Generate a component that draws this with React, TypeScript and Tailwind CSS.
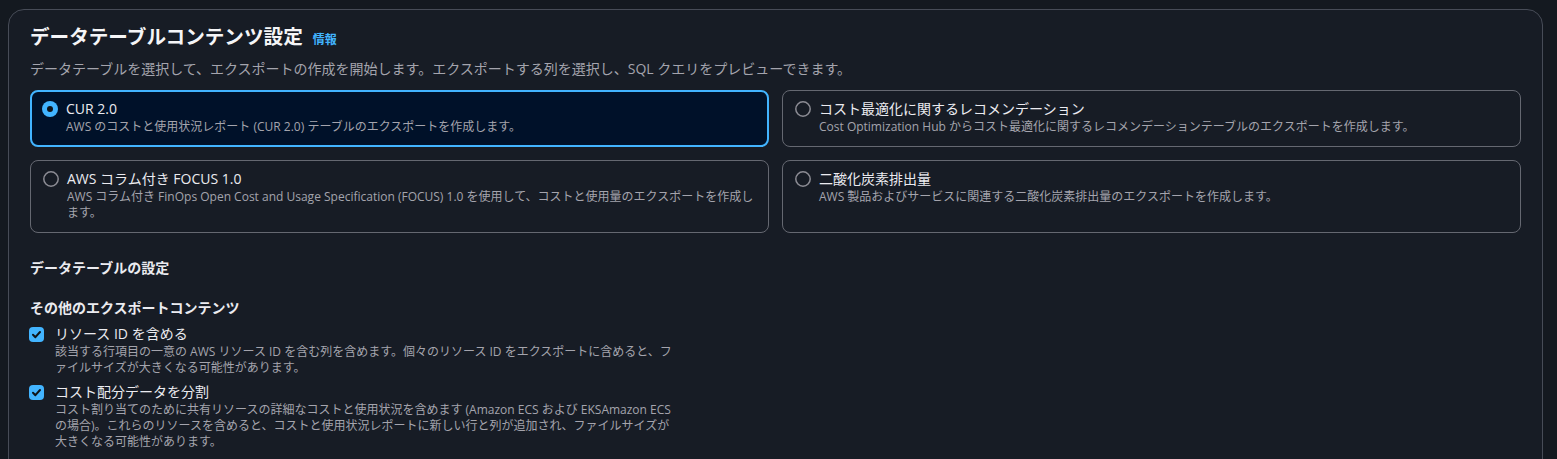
import React from "react";

const FONT = { fontFamily: '"Open Sans", "Noto Sans CJK JP", sans-serif' };

function Radio({ checked }: { checked: boolean }) {
  return (
    <svg width="16" height="16" viewBox="0 0 16 16" className="shrink-0 mt-[2px]">
      {checked ? (
        <>
          <circle cx="8" cy="8" r="8" fill="#42b4ff" />
          <circle cx="8" cy="8" r="3" fill="#0f141a" />
        </>
      ) : (
        <circle cx="8" cy="8" r="7.2" fill="none" stroke="#8c8c94" strokeWidth="1.5" />
      )}
    </svg>
  );
}

function Checkbox() {
  return (
    <div className="shrink-0 mt-[3px] -ml-[1px] w-[15px] h-[15px] rounded-[4px] bg-[#42b4ff] flex items-center justify-center">
      <svg width="11" height="11" viewBox="0 0 11 11">
        <path d="M2 5.8 L4.4 8.2 L9 3" fill="none" stroke="#0f141a" strokeWidth="2" strokeLinecap="round" strokeLinejoin="round" />
      </svg>
    </div>
  );
}

function Tile({
  checked,
  title,
  lines,
}: {
  checked: boolean;
  title: string;
  lines: string[];
}) {
  return (
    <div
      className={
        checked
          ? "rounded-[8px] border-2 border-[#42b4ff] bg-[#001129] pl-[10px] pr-[10px] pt-[7px] pb-[10px] flex gap-2"
          : "rounded-[8px] border border-[#656871] pl-[12px] pr-[12px] pt-[8px] pb-[11px] flex gap-2"
      }
    >
      <Radio checked={checked} />
      <div className="flex flex-col min-w-0">
        <div className="text-[14px] leading-[20px] text-[#ebebf0]">{title}</div>
        <div className="text-[12px] leading-[16px] text-[#a4a4ad]">
          {lines.map((l, i) => (
            <div key={i} className="whitespace-nowrap">
              {l}
            </div>
          ))}
        </div>
      </div>
    </div>
  );
}

function CheckItem({ label, lines }: { label: string; lines: string[] }) {
  return (
    <div className="flex gap-[11px]">
      <Checkbox />
      <div className="flex flex-col">
        <div className="text-[14px] leading-[20px] text-[#ebebf0]">{label}</div>
        <div className="text-[12px] leading-[16px] text-[#a4a4ad]">
          {lines.map((l, i) => (
            <div key={i} className="whitespace-nowrap">
              {l}
            </div>
          ))}
        </div>
      </div>
    </div>
  );
}

export default function App() {
  return (
    <div className="w-[1557px] h-[459px] overflow-hidden bg-[#141920]" style={FONT}>
      <div className="ml-[8px] mt-[9px] w-[1535px] h-[480px] rounded-[16px] border border-[#474c57] bg-[#171c25] pl-[21px] pr-[21px] pt-[15px]">
        <div className="flex items-baseline gap-[10px]">
          <h2 className="text-[19.6px] leading-[24px] font-bold text-[#f5f5f7]">データテーブルコンテンツ設定</h2>
          <span className="text-[12px] font-bold text-[#42b4ff]">情報</span>
        </div>
        <p className="mt-[10px] text-[14px] leading-[20px] text-[#a4a4ad]">
          データテーブルを選択して、エクスポートの作成を開始します。エクスポートする列を選択し、SQL クエリをプレビューできます。
        </p>
        <div className="mt-[11px] grid grid-cols-2 gap-[13px]">
          <Tile
            checked
            title="CUR 2.0"
            lines={["AWS のコストと使用状況レポート (CUR 2.0) テーブルのエクスポートを作成します。"]}
          />
          <Tile
            checked={false}
            title="コスト最適化に関するレコメンデーション"
            lines={["Cost Optimization Hub からコスト最適化に関するレコメンデーションテーブルのエクスポートを作成します。"]}
          />
          <Tile
            checked={false}
            title="AWS コラム付き FOCUS 1.0"
            lines={[
              "AWS コラム付き FinOps Open Cost and Usage Specification (FOCUS) 1.0 を使用して、コストと使用量のエクスポートを作成し",
              "ます。",
            ]}
          />
          <Tile
            checked={false}
            title="二酸化炭素排出量"
            lines={["AWS 製品およびサービスに関連する二酸化炭素排出量のエクスポートを作成します。"]}
          />
        </div>
        <div className="mt-[25px] text-[14px] leading-[20px] font-bold text-[#ebebf0]">データテーブルの設定</div>
        <div className="mt-[20px] text-[14px] leading-[20px] font-bold text-[#ebebf0]">その他のエクスポートコンテンツ</div>
        <div className="mt-[6px] flex flex-col gap-[6px]">
          <CheckItem
            label="リソース ID を含める"
            lines={[
              "該当する行項目の一意の AWS リソース ID を含む列を含めます。個々のリソース ID をエクスポートに含めると、フ",
              "ァイルサイズが大きくなる可能性があります。",
            ]}
          />
          <CheckItem
            label="コスト配分データを分割"
            lines={[
              "コスト割り当てのために共有リソースの詳細なコストと使用状況を含めます (Amazon ECS および EKSAmazon ECS",
              "の場合)。これらのリソースを含めると、コストと使用状況レポートに新しい行と列が追加され、ファイルサイズが",
              "大きくなる可能性があります。",
            ]}
          />
        </div>
      </div>
    </div>
  );
}
